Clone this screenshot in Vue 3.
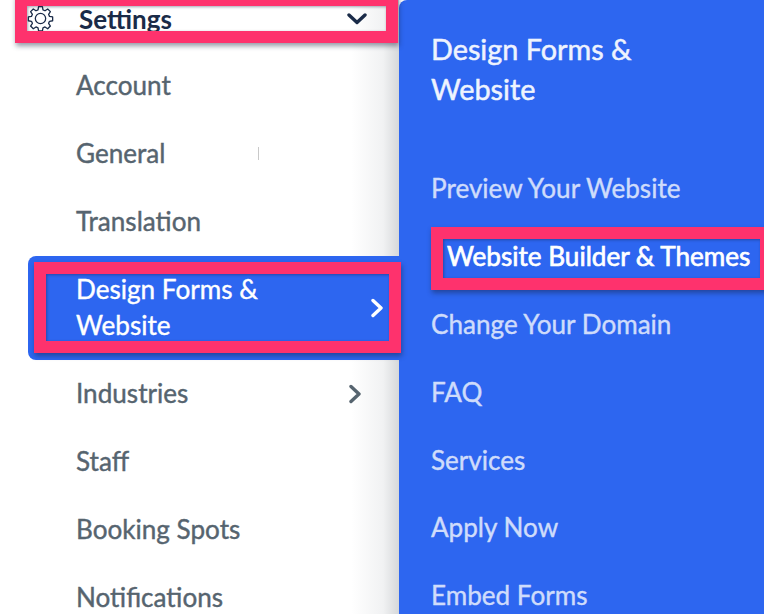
<template>
  <div class="page">
    <aside class="sidebar">
      <div class="settings">
        <svg class="gear" viewBox="0 0 24 24" width="27" height="27" fill="none" stroke="#1a2b48" stroke-width="1.15" stroke-linejoin="round">
          <circle cx="12" cy="12" r="4.6" />
          <path d="M10.3 1.5h3.4l.5 2.8 1.8.8 2.4-1.6 2.4 2.4-1.6 2.4.8 1.8 2.8.5v3.4l-2.8.5-.8 1.8 1.6 2.4-2.4 2.4-2.4-1.6-1.8.8-.5 2.8h-3.4l-.5-2.8-1.8-.8-2.4 1.6-2.4-2.4 1.6-2.4-.8-1.8-2.8-.5v-3.4l2.8-.5.8-1.8-1.6-2.4 2.4-2.4 2.4 1.6 1.8-.8z" />
        </svg>
        <span class="settings-label">Settings</span>
        <svg class="caret" viewBox="0 0 20 12" width="20" height="12" fill="none" stroke="#1a2b48" stroke-width="3.4" stroke-linecap="round" stroke-linejoin="round">
          <path d="M2 2l8 7.5L18 2" />
        </svg>
      </div>
      <nav class="menu">
        <a v-for="item in menuItems" :key="item.label" class="menu-item" :class="{ active: item.active }">
          <span class="menu-label">{{ item.label }}</span>
          <svg v-if="item.arrow" class="chevron" viewBox="0 0 12 20" width="12" height="20" fill="none" stroke="currentColor" stroke-width="3.4" stroke-linecap="round" stroke-linejoin="round">
            <path d="M2 2.5l8 7.5-8 7.5" />
          </svg>
        </a>
      </nav>
      <i class="mark"></i>
    </aside>
    <section class="panel">
      <h2>Design Forms &amp; Website</h2>
      <hr />
      <a v-for="link in panelLinks" :key="link" class="panel-link" :class="{ current: link === currentLink }">{{ link }}</a>
    </section>
    <div class="highlight hl-settings"></div>
    <div class="highlight hl-design"></div>
    <div class="highlight hl-builder"></div>
  </div>
</template>

<script setup>
const menuItems = [
  { label: 'Account' },
  { label: 'General' },
  { label: 'Translation' },
  { label: 'Design Forms & Website', arrow: true, active: true },
  { label: 'Industries', arrow: true },
  { label: 'Staff' },
  { label: 'Booking Spots' },
  { label: 'Notifications' },
]

const currentLink = 'Website Builder & Themes'

const panelLinks = [
  'Preview Your Website',
  currentLink,
  'Change Your Domain',
  'FAQ',
  'Services',
  'Apply Now',
  'Embed Forms',
]
</script>

<style>
html,
body {
  margin: 0;
  overflow: hidden;
  background: #fff;
}
</style>

<style scoped>
.page {
  position: relative;
  display: flex;
  width: 764px;
  height: 614px;
  overflow: hidden;
  font-family: Lato, "Open Sans", sans-serif;
  font-size: 26.1px;
}

.sidebar {
  position: relative;
  box-sizing: border-box;
  width: 399px;
  flex: none;
  background: linear-gradient(to right, #fff 88%, #f1f2f3 96%, #d6d8da 100%);
}

.settings {
  display: flex;
  align-items: center;
  height: 37px;
  padding-left: 27px;
  color: #1a2b48;
}

.gear {
  flex: none;
}

.settings-label {
  margin-left: 25px;
  font-size: 26px;
  font-weight: 700;
}

.caret {
  margin-left: auto;
  margin-right: 32px;
}

.menu {
  display: flex;
  flex-direction: column;
  padding-top: 15px;
  padding-left: 28px;
}

.menu-item {
  display: flex;
  align-items: center;
  min-height: 68px;
  padding-left: 48px;
  padding-right: 38px;
  color: #56646f;
  line-height: 36px;
  -webkit-text-stroke: 0.4px currentColor;
}

.menu-label {
  flex: 1;
  padding-bottom: 2px;
}

.menu-item.active {
  box-sizing: border-box;
  height: 104px;
  padding-right: 16px;
  border-radius: 8px 0 0 8px;
  background: #2d66f0;
  color: #fff;
}

.menu-item.active .menu-label {
  flex: none;
  width: 200px;
  margin-right: auto;
}

.mark {
  position: absolute;
  left: 258px;
  top: 147px;
  width: 1px;
  height: 13px;
  background: #c9c9c9;
}

.panel {
  flex: 1;
  display: flex;
  flex-direction: column;
  box-sizing: border-box;
  padding: 29px 30px 0 32px;
  border-top-left-radius: 8px;
  background: #2d66f0;
  color: #cfdcfb;
  -webkit-text-stroke: 0.4px currentColor;
}

h2 {
  margin: 0;
  width: 240px;
  color: #eef3fe;
  font-size: 28.8px;
  font-weight: 400;
  line-height: 40px;
  -webkit-text-stroke: 0.5px currentColor;
}

hr {
  width: 303px;
  height: 1px;
  margin: 28px 0 17px;
  border: 0;
  background: #5583f3;
}

.panel-link {
  flex: none;
  height: 67.9px;
  line-height: 68px;
  white-space: nowrap;
}

.panel-link.current {
  padding-left: 16px;
  color: #fff;
  -webkit-text-stroke: 0.7px currentColor;
}

.highlight {
  position: absolute;
  box-sizing: border-box;
  border: 12px solid #fe326d;
  box-shadow: 1px 3px 5px rgba(20, 30, 60, 0.45), inset 1px 1px 3px rgba(20, 30, 60, 0.4);
}

.hl-settings {
  left: 15px;
  top: -6px;
  width: 383px;
  height: 49px;
}

.hl-design {
  left: 34px;
  top: 262px;
  width: 367px;
  height: 91px;
}

.hl-builder {
  left: 431px;
  top: 227px;
  width: 345px;
  height: 63px;
  border-right-width: 16px;
}
</style>
